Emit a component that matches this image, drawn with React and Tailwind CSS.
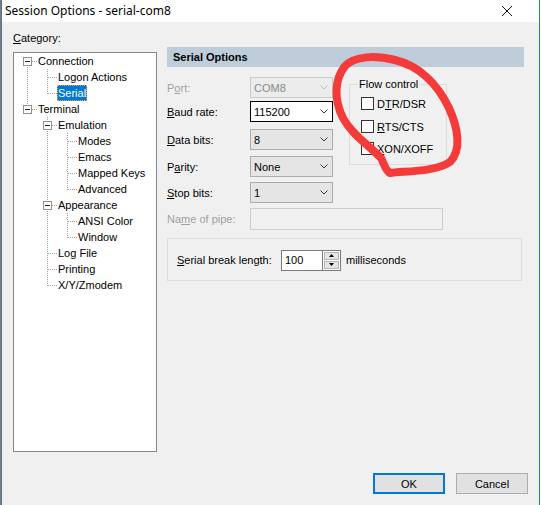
import React from "react";

const Chevron = ({ color = "#404040" }) => (
  <svg width="8" height="5" viewBox="0 0 8 5" className="shrink-0">
    <path d="M0.5 0.5 L4 4 L7.5 0.5" fill="none" stroke={color} strokeWidth="1" />
  </svg>
);

const DOT = "#a0a0a0";

function Cell({ c }) {
  return (
    <svg width="20" height="16" viewBox="0 0 20 16" className="shrink-0" shapeRendering="crispEdges">
      {c.pass && <line x1="10.5" y1="0" x2="10.5" y2="16" stroke={DOT} strokeDasharray="1 1" />}
      {c.up && <line x1="10.5" y1="0" x2="10.5" y2="9" stroke={DOT} strokeDasharray="1 1" />}
      {c.down && <line x1="10.5" y1="8" x2="10.5" y2="16" stroke={DOT} strokeDasharray="1 1" />}
      {c.leaf && <line x1="11" y1="8.5" x2="20" y2="8.5" stroke={DOT} strokeDasharray="1 1" />}
      {c.box && (
        <>
          <line x1="15" y1="8.5" x2="20" y2="8.5" stroke={DOT} strokeDasharray="1 1" />
          <rect x="6.5" y="4.5" width="8" height="8" fill="#fff" stroke="#919191" />
          <line x1="8" y1="8.5" x2="13" y2="8.5" stroke="#222" />
        </>
      )}
    </svg>
  );
}

const N = {};
const P = { pass: true };
const rows = [
  { label: "Connection", cells: [{ box: true, down: true }] },
  { label: "Logon Actions", cells: [P, { leaf: true, up: true, down: true }] },
  { label: "Serial", cells: [P, { leaf: true, up: true }], sel: true },
  { label: "Terminal", cells: [{ box: true, up: true }] },
  { label: "Emulation", cells: [N, { box: true, up: true, down: true }] },
  { label: "Modes", cells: [N, P, { leaf: true, up: true, down: true }] },
  { label: "Emacs", cells: [N, P, { leaf: true, up: true, down: true }] },
  { label: "Mapped Keys", cells: [N, P, { leaf: true, up: true, down: true }] },
  { label: "Advanced", cells: [N, P, { leaf: true, up: true }] },
  { label: "Appearance", cells: [N, { box: true, up: true, down: true }] },
  { label: "ANSI Color", cells: [N, P, { leaf: true, up: true, down: true }] },
  { label: "Window", cells: [N, P, { leaf: true, up: true }] },
  { label: "Log File", cells: [N, { leaf: true, up: true, down: true }] },
  { label: "Printing", cells: [N, { leaf: true, up: true, down: true }] },
  { label: "X/Y/Zmodem", cells: [N, { leaf: true, up: true }] },
];

function Combo({ value, variant }) {
  const cls =
    variant === "focus"
      ? "bg-white border-black"
      : variant === "disabled"
      ? "bg-[#ececec] border-[#cccccc] text-[#8a8a8a]"
      : "bg-[#e5e5e5] border-[#acacac]";
  return (
    <div className={`w-[83px] h-[21px] border ${cls} flex items-center justify-between pl-[3px] pr-[4px]`}>
      <span>{value}</span>
      <Chevron color={variant === "disabled" ? "#bdbdbd" : "#3c3c3c"} />
    </div>
  );
}

function FormRow({ label, value, variant, mt, disabled }) {
  return (
    <div className={`flex items-center h-[21px] ${mt}`}>
      <div className={`w-[83px] whitespace-nowrap ${disabled ? "text-[#a0a0a0]" : ""}`}>{label}</div>
      <Combo value={value} variant={variant} />
    </div>
  );
}

function Check({ children, mt }) {
  return (
    <div className={`flex items-center h-[13px] ${mt}`}>
      <div className="w-[13px] h-[13px] border border-[#333] bg-white shrink-0" />
      <span className="ml-[3px] whitespace-nowrap">{children}</span>
    </div>
  );
}

export default function App() {
  return (
    <div className="relative w-[541px] h-[505px] bg-white flex font-['Liberation_Sans',Arial,sans-serif] text-[11px] leading-[16px] text-black overflow-hidden">
      <div className="w-[1px] h-full bg-[#a8743c]" />
      <div className="w-[539px] h-full border-x border-[#2b7bd4] flex flex-col bg-[#f0f0f0]">
        {/* title bar */}
        <div className="h-[22px] bg-white flex items-center justify-between pl-[3px] pr-[27px] shrink-0">
          <span className="font-['Noto_Sans',sans-serif] text-[12px]">Session Options - serial-com8</span>
          <svg width="10" height="10" viewBox="0 0 10 10">
            <path d="M0 0 L10 10 M10 0 L0 10" stroke="#111" strokeWidth="1" />
          </svg>
        </div>

        {/* body */}
        <div className="flex-1 flex flex-col px-[11px]">
          <div className="flex">
            {/* left column */}
            <div className="w-[144px] flex flex-col">
              <div className="mt-[8px]">
                <u>C</u>ategory:
              </div>
              <div className="mt-[6px] h-[400px] border border-[#828790] bg-white pl-[3px] flex flex-col">
                {rows.map((r) => (
                  <div key={r.label} className="flex h-[16px] items-center">
                    {r.cells.map((c, i) => (
                      <Cell key={i} c={c} />
                    ))}
                    <span
                      className={`px-[1px] h-[16px] leading-[16px] whitespace-nowrap ${
                        r.sel
                          ? "bg-[#0078d7] text-white outline-1 outline-dotted outline-[#f2a23a] -outline-offset-1"
                          : ""
                      }`}
                    >
                      {r.label}
                    </span>
                  </div>
                ))}
              </div>
            </div>

            {/* right column */}
            <div className="ml-[10px] w-[357px] mt-[25px] flex flex-col">
              <div className="h-[20px] bg-[#bfcddb] font-bold pl-[6px] flex items-center">Serial Options</div>

              <div className="flex">
                <div className="w-[166px] flex flex-col">
                  <FormRow
                    label={<>P<u>o</u>rt:</>}
                    value="COM8"
                    variant="disabled"
                    mt="mt-[10px]"
                    disabled
                  />
                  <FormRow label={<><u>B</u>aud rate:</>} value="115200" variant="focus" mt="mt-[3px]" />
                  <FormRow label={<><u>D</u>ata bits:</>} value="8" mt="mt-[7px]" />
                  <FormRow label={<>P<u>a</u>rity:</>} value="None" mt="mt-[6px]" />
                  <FormRow label={<><u>S</u>top bits:</>} value="1" mt="mt-[5px]" />
                </div>

                <fieldset className="ml-[16px] w-[98px] h-[89px] mt-[9px] border border-[#dcdcdc] pl-[11px]">
                  <legend className="px-[1px] -ml-[3px]">Flow control</legend>
                  <Check mt="mt-[5px]">
                    D<u>T</u>R/DSR
                  </Check>
                  <Check mt="mt-[10px]">
                    <u>R</u>TS/CTS
                  </Check>
                  <Check mt="mt-[9px]">
                    <u>X</u>ON/XOFF
                  </Check>
                </fieldset>
              </div>

              <div className="flex items-center h-[22px] mt-[5px]">
                <div className="w-[83px] text-[#a0a0a0] whitespace-nowrap">
                  Na<u>m</u>e of pipe:
                </div>
                <div className="w-[193px] h-[22px] border border-[#cccccc] bg-[#f0f0f0]" />
              </div>

              <div className="mt-[8px] w-[355px] h-[43px] border border-[#dcdcdc] flex items-center pl-[9px] pt-[1px]">
                <div className="w-[104px] whitespace-nowrap">
                  <u>S</u>erial break length:
                </div>
                <div className="flex h-[21px]">
                  <div className="w-[42px] h-[21px] border border-[#7a7a7a] bg-white pl-[3px] flex items-center">100</div>
                  <div className="w-[18px] h-[21px] flex flex-col border-y border-r border-[#7a7a7a] bg-white p-[1px] gap-[1px]">
                    <div className="flex-1 bg-[#e5e5e5] border border-[#b5b5b5] flex items-center justify-center">
                      <svg width="5" height="3" viewBox="0 0 5 3">
                        <path d="M2.5 0 L5 3 L0 3 Z" fill="#000" />
                      </svg>
                    </div>
                    <div className="flex-1 bg-[#e5e5e5] border border-[#b5b5b5] flex items-center justify-center">
                      <svg width="5" height="3" viewBox="0 0 5 3">
                        <path d="M0 0 L5 0 L2.5 3 Z" fill="#000" />
                      </svg>
                    </div>
                  </div>
                </div>
                <span className="ml-[5px]">milliseconds</span>
              </div>
            </div>
          </div>

          {/* buttons */}
          <div className="mt-[21px] flex justify-end gap-[11px]">
            <button className="w-[72px] h-[21px] bg-[#e1e1e1] border-2 border-[#0078d7] flex items-center justify-center">
              OK
            </button>
            <button className="w-[72px] h-[21px] bg-[#e1e1e1] border border-[#adadad] flex items-center justify-center">
              Cancel
            </button>
          </div>
        </div>
      </div>

      {/* red hand-drawn highlight */}
      <svg className="absolute left-0 top-0 pointer-events-none" width="541" height="505" viewBox="0 0 541 505">
        <path
          d="M381 158 C370 146, 352 135, 343 118 C334 100, 334 80, 345 66 C355 56, 375 55, 395 60 C420 66, 438 85, 449 108 C458 128, 462 150, 450 162 C435 172, 405 171, 390 173 C385 170, 384 163, 381 158"
          fill="none"
          stroke="#f53a3a"
          strokeWidth="8"
          strokeLinecap="round"
          strokeLinejoin="round"
        />
      </svg>
    </div>
  );
}
